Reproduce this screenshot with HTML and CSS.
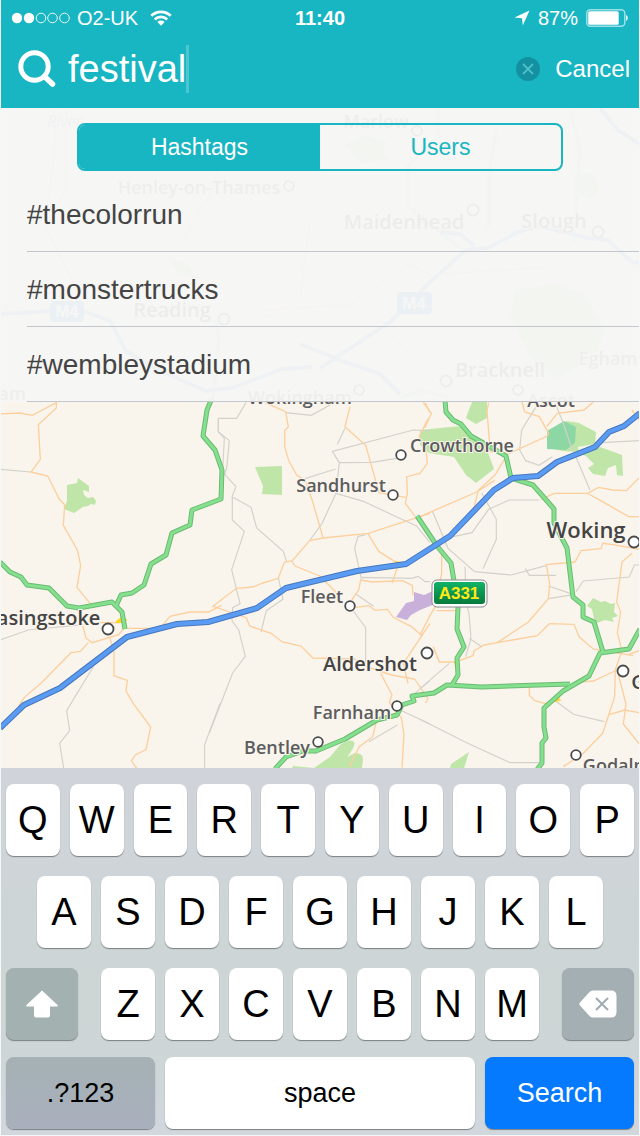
FILE: index.html
```html
<!DOCTYPE html>
<html lang="en">
<head>
    <meta charset="UTF-8">
    <meta name="viewport" content="width=device-width, initial-scale=1.0">
    <title>Search</title>
    <link rel="stylesheet" href="styles.css">
</head>
<body>
    <header class="header">
        <div class="status">
            <div class="status-left">
                <svg class="signal" width="60" height="12" viewBox="0 0 60 12">
                    <circle cx="6" cy="6" r="5.2" fill="#fff"/>
                    <circle cx="18" cy="6" r="5.2" fill="#fff"/>
                    <g fill="none" stroke="#fff" stroke-width="0.9">
                        <circle cx="30" cy="6" r="4.8"/>
                        <circle cx="41.500" cy="6" r="4.8"/>
                        <circle cx="53.500" cy="6" r="4.8"/>
                    </g>
                </svg>
                <span>O2-UK</span>
                <svg class="wifi" width="22" height="16" viewBox="0 0 22 16">
                    <g fill="none" stroke="#fff" stroke-width="2.8">
                        <path d="M1.300 5.800a13.800 13.800 0 0 1 19.400 0"/>
                        <path d="M4.800 9.500a8.800 8.800 0 0 1 12.400 0"/>
                    </g>
                    <path d="M11 15.800l-3.600-3.700a5.100 5.100 0 0 1 7.200 0z" fill="#fff"/>
                </svg>
            </div>
            <strong>11:40</strong>
            <div class="status-right">
                <svg width="16" height="16" viewBox="0 0 16 16">
                    <path d="M15.500 0.500L8.800 15.600 8 8.200 0.500 7.400z" fill="#fff"/>
                </svg>
                <span class="percent">87%</span>
                <svg width="43" height="18" viewBox="0 0 43 18">
                    <rect x="0.800" y="0.800" width="38" height="16.400" rx="3.500" fill="none" stroke="#9de0e6" stroke-width="1.500"/>
                    <rect x="2.200" y="2.200" width="30.500" height="13.600" rx="1.500" fill="#fff"/>
                    <path d="M40 6c2.400 0.600 2.400 5.400 0 6z" fill="#d5f3f5"/>
                </svg>
            </div>
        </div>
        <form class="search">
            <svg width="38" height="38" viewBox="0 0 38 38">
                <circle cx="16.500" cy="16.500" r="13.700" fill="none" stroke="#fff" stroke-width="5"/>
                <path d="M26.500 26.500l8 7.500" stroke="#fff" stroke-width="5.500" stroke-linecap="round"/>
            </svg>
            <input type="text" class="search-input" id="searchInput" value="festival" aria-label="Search">
            <span class="caret"></span>
            <button type="button" class="clear" aria-label="Clear">
                <svg width="24" height="24" viewBox="0 0 24 24">
                    <circle cx="12" cy="12" r="12" fill="#1491a0"/>
                    <path d="M7 7l10 10M17 7L7 17" stroke="#4cc0cb" stroke-width="1.800"/>
                </svg>
            </button>
            <button type="button" class="cancel">Cancel</button>
        </form>
    </header>

    <main class="content">
        <svg class="map" viewBox="1 108 638 660" preserveAspectRatio="xMidYMid slice">
            <defs>
                <linearGradient id="shield" x1="0" y1="0" x2="0" y2="1">
                    <stop offset="0" stop-color="#10b366"/>
                    <stop offset="1" stop-color="#087a3c"/>
                </linearGradient>
            </defs>
            <rect x="0" y="100" width="640" height="680" fill="#f9f5ed"/>

            <!-- woods and parks -->
            <g fill="#bfe6a8">
                <path d="M78 478l11 8v6l-6-2 1 5 4 3 5-1 3 4-1 4-4-1-3 2-5 1-9 6-10-4 3-8v-16l10-2z"/>
                <path d="M255 467l27-1v29l-20-1 1-8z"/>
                <path d="M466 418l6-16h15v16l-11 6z"/>
                <path d="M420 430l40-4 16 14 10 7 8 22-18 14-10-8-12-18-25-4-9-8z"/>
                <path d="M547 432l20-11 12 2 17 9-1 12-17 3 1 5-17-1-15-4z"/>
                <path d="M578 453l22-6 22 8 1 21-6-1-1-10-8 3-3 8-12-2-5-6 6-4-8-8z"/>
                <path d="M593 598l8 4 4-1 6 3 4-1-1 9 4 4-6 2 2 4-9-2-8 3-3-4-2-10-5-3z"/>
                <path d="M469 752l-5 16h-14l1-4z"/>
                <path d="M293 766l21 2 16-11 10-12q10-7 14-3 2 4-7 15l8-4q8 0 8 6l-1 9h-70z"/>
                <path d="M345 145l20-10 22 8-5 8 8 8-30 4zM575 175l16-2 8 14-8 12-16-8zM170 258l18 6 8 14-18-4zM515 290l40-6 28 10 22 34-10 30-40 20-24-20-20-40z"/>
            </g>
            <path d="M547 431l17-10 12 6-1 16-9 7-19-1z" fill="#8dd7a5"/>
            <path d="M396 617l10-14 8-2 0-9 10 3 9-4 2 13-15 6-9 5-4 5z" fill="#c9b0db"/>

            <!-- minor roads -->
            <g fill="none" stroke="#d4d1cb" stroke-width="3.500">
                <g transform="translate(0 400) scale(0.33333)">
                    <path d="M0 208l92 8M0 720l85-30 165-16M280 800l-80 132 9 60-30 38 12 74M660 910l-46 124v70M655 55v40l18 20-5 95"/>
                </g>
                <g transform="translate(210 400) scale(0.33333)">
                    <path d="M108 8L80 55H25v40l33 27-8 83-6 18 34 37-12 30 57 32 17 62 80 70 10 32M67 290v70l36 34-38 115 25 102-22 12-2 40 20 26 20 80-38 50-70 180M228 38l76 8 72-40M405 85l-23 48M660 92l-50-2-243 64 21 34 98-1 88-14M388 188l-10 92-42 90-36 50M285 236l92-29M378 280l82 24 120 56 40 18 40 50M466 405l-22 4-10 36 20 92M205 533l14 65-50 34-16 64M437 582l54 37M430 633l37 50v105M455 532l150 3 20-6 20 16h15M660 842l-60 50M570 930l90 42M562 975l-85 50"/>
                </g>
                <g transform="translate(420 400) scale(0.33333)">
                    <path d="M347 22l-42 68-6 60 18 32 40 14 40-26M410 20l20 50 20 60 60 140M545 128l113-6M38 335l46 110 80 70 110 10 104-28M185 278l44 80v60l-40 88M90 412l66-14 50-70 62-28h90M316 506l12 20h80M386 558l75 26-76 12M468 575l22-32 138-12 15-36h15M135 500l4 110 8 30 6 75-16 55M148 715l38 26M0 866l88-76M0 958l140 70 130 60h86M410 905l50 38 93 22"/>
                </g>
            </g>
            <g fill="none" stroke="#fccf9d" stroke-width="4">
                <g transform="translate(0 400) scale(0.33333)">
                    <path d="M0 42l60-3 37 7 72-38v16l-54 50 6 104-28 38 50 12 35 70 16 16-4 62 42 74 10 46-11 66 44 54M375 685h105l30-36 60-13h55l40-20M300 668h60M248 678l10 36 18 14 80-24 16-20M265 728l-24 26-28 4-90 92-50 42-18 28M330 715l12 40v72l40 14-4 32 22 38 52 70-14 68-32 16-12 18 18 24"/>
                </g>
                <g transform="translate(210 400) scale(0.33333)">
                    <path d="M165 8l62 27 8 46-11 10v50l12 40 24 44 26 16 20 58 33 114M420 20l-15 60 62 56 34 120 6 22 80 14M645 8l15 30M655 55l-28 55 20 30 5 50-22 30-40 10 2 50-6 30 30 40M660 340l-185 60-136 14-40 8-52 60-24 5-18 48-46 14-30 12-50 4-70 54 100 34 10 25 64 22 34 26 56 12 36 36 125 3 20 18 90 30 70 12 40 60-8 12M473 400l34 55 58 36-18 58M245 483l10 15 75 30 50 51M452 538l-5 30-22 32M452 540l35 6 90-4 30 14 2 30M437 622l40-5 18 14 37-3 18 24 54 28 34 28M660 670l-80 120 14 60M512 820l34 65-8 22 36 46 8 50-6 100M500 960l-12 50-40 30-30 60"/>
                </g>
                <g transform="translate(420 400) scale(0.33333)">
                    <path d="M10 8l24 32-20 44M206 8l-5 26 10 120 48 10M306 6l8 30 44 14 28 50-4 8-118 54M520 6l-28 24-80 10-32 40M0 350l170-74 54-35M255 175l-30 50-50 46-12 48M363 298l40-18h100l32-18 44 8 40 2 38-38M506 282l36 20 84 48h32M658 448l-80-14-30-4-5 16-60 6-18 34-86 8 10 58-4 44-60 70-93 62M636 460l-30 26-16 120 12 30-10 62 14 54M65 450v70l-8 40M48 560l12 36-30 50-30 60M50 632h62M40 740l18 46h48l53-19 3-14 30-18 160-28 36-36 74 2 16 38 42 36 120 20M328 860v26l16 16 30 8 50-10M460 848l60-5 65-30M606 752l-20 56-2 82-36 110-58 60-60 40M592 812l26 100-8 60 48 60M568 944l46-14 44 8M628 762l30-10M636 30l22 30"/>
                </g>
            </g>
            <g fill="#ffd51f">
                <path d="M116 621l4-3 3-3 4 5-2 3h-9zM31 699l5-2 1 3-5 2zM395 561l8 1 2 4-8 1zM454 661h4v6h-3zM556 698l4-1-1 4-5 1z"/>
            </g>

            <!-- roads hidden behind the results -->
            <g fill="none" stroke-linejoin="round">
                <path d="M56 108l-2 50-10 70M66 108v80l-20 40 30 60M180 245l30-50 20-60M290 190l20 30-10 80-40 20M260 310l90-5 60-40 20 10 120-8M370 310l80 90" stroke="#fbc78e"/>
                <path d="M438 108v30l-30 28v40l30 24 24 20M570 110l10 40-4 60-2 32M215 320l4 20-6 60M400 398l22-8 26 8M497 130l-8 40v60" stroke="#a5e2ab" stroke-width="3"/>
                <path d="M0 314l50-3M84 311l26 10 16 30 30 18 50 22 26-3 50-19 30-2M300 344l40 16 40 14 20 20M320 368l70-46 40-40 36-32 22-2 30-16 20-6 50 12 20 2 24 22 28 3M440 232l20 2 14 12M600 108l18 22 22 14" stroke="#7fabea" stroke-width="4"/>
            </g>

            <!-- A roads -->
            <g id="a-roads" fill="none" stroke-linejoin="round">
                <g stroke="#6cba75" stroke-width="5">
                    <path d="M212 398l-5 12-4 26 12 14 7 20-1 29-29 11-2 15-18 8-6 22-15 9-7 21-12 8-11 2-5 11"/>
                    <path d="M0 562l10 10 11 5 6 8 22 3 18 18 12 2 33-6 10 10 3 17"/>
                    <path d="M417 516l20 30 14 17 4 24 3 20-1 22 7 18-7 11 1 17-6 10"/>
                    <path d="M445 400l1 12 7 8 8 4 10 12 16 9 19 11 5 22 22 7 21 24v14l13 25 6 49 10 8v12l11 5 9 30"/>
                    <path d="M640 629l-11 20-29 4-11 23-26 15-19 17v19l2 11-4 5v20l-6 8"/>
                    <path d="M570 684l-88 3-35-2-13 8-22 3 2 5-12 4-5 10-20 5-32 19-29 12h-13l-17 6-11 12"/>
                </g>
                <g stroke="#84e08c" stroke-width="3">
                    <path d="M212 398l-5 12-4 26 12 14 7 20-1 29-29 11-2 15-18 8-6 22-15 9-7 21-12 8-11 2-5 11"/>
                    <path d="M0 562l10 10 11 5 6 8 22 3 18 18 12 2 33-6 10 10 3 17"/>
                    <path d="M417 516l20 30 14 17 4 24 3 20-1 22 7 18-7 11 1 17-6 10"/>
                    <path d="M445 400l1 12 7 8 8 4 10 12 16 9 19 11 5 22 22 7 21 24v14l13 25 6 49 10 8v12l11 5 9 30"/>
                    <path d="M640 629l-11 20-29 4-11 23-26 15-19 17v19l2 11-4 5v20l-6 8"/>
                    <path d="M570 684l-88 3-35-2-13 8-22 3 2 5-12 4-5 10-20 5-32 19-29 12h-13l-17 6-11 12"/>
                </g>
            </g>

            <!-- motorway -->
            <g fill="none" stroke-linejoin="round">
                <path d="M0 728l24-23 36-17 67-51 50-13 31-2 49-14 29-20 71-17 49-7 44-28 44-46 19-12 25-2 19-14 38-15 14-15 15-6 16-13" stroke="#4777bd" stroke-width="6"/>
                <path d="M0 728l24-23 36-17 67-51 50-13 31-2 49-14 29-20 71-17 49-7 44-28 44-46 19-12 25-2 19-14 38-15 14-15 15-6 16-13" stroke="#5a9cf3" stroke-width="4"/>
            </g>

            <!-- towns -->
            <g fill="#fff" stroke="#4a4a4a" stroke-width="1.800">
                <circle cx="108" cy="629" r="5.500"/>
                <circle cx="401" cy="455" r="4.800"/>
                <circle cx="393" cy="495" r="4.800"/>
                <circle cx="634" cy="542" r="5.500"/>
                <circle cx="350" cy="606" r="4.800"/>
                <circle cx="427" cy="653" r="5.500"/>
                <circle cx="397" cy="706" r="4.800"/>
                <circle cx="318" cy="742" r="4.800"/>
                <circle cx="623" cy="671" r="5.500"/>
                <circle cx="576" cy="755" r="4.800"/>
                <circle cx="289" cy="186" r="4.800"/>
                <circle cx="417" cy="131" r="4.800"/>
                <circle cx="473" cy="210" r="5.500"/>
                <circle cx="598" cy="232" r="5.500"/>
                <circle cx="224" cy="319" r="5.500"/>
                <circle cx="446" cy="381" r="5.500"/>
                <circle cx="359" cy="390" r="4.800"/>
                <circle cx="518" cy="390" r="4.800"/>
            </g>
            <g class="town">
                <text x="462" y="452">Crowthorne</text>
                <text x="341" y="492">Sandhurst</text>
                <text x="322" y="603">Fleet</text>
                <text x="352" y="719">Farnham</text>
                <text x="277" y="754">Bentley</text>
                <text x="630" y="772">Godalming</text>
                <text x="199" y="194">Henley-on-Thames</text>
                <text x="376" y="128">Marlow</text>
                <text x="608" y="365">Egham</text>
                <text x="300" y="404">Wokingham</text>
                <text x="551" y="407">Ascot</text>
                <text x="12" y="400">am</text>
            </g>
            <g class="town town-big">
                <text x="42" y="625">Basingstoke</text>
                <text x="370" y="671">Aldershot</text>
                <text class="town-large" x="586" y="538">Woking</text>
                <text x="677" y="689">Guildford</text>
                <text x="404" y="229">Maidenhead</text>
                <text x="554" y="228">Slough</text>
                <text x="172" y="317">Reading</text>
                <text x="500" y="377">Bracknell</text>
            </g>
            <text class="river" x="47" y="127">River</text>

            <!-- road shields -->
            <g class="shield">
                <rect x="432" y="580" width="55" height="27" rx="5" fill="#fff" stroke="#8b8b8b"/>
                <rect x="434" y="582" width="51" height="22" rx="3" fill="url(#shield)"/>
                <text x="459" y="599" fill="#ffe916">A331</text>
                <rect x="397" y="292" width="35" height="22" rx="4" fill="#2f8fdc"/>
                <text x="414" y="309" fill="#fff">M4</text>
                <rect x="50" y="301" width="34" height="21" rx="4" fill="#2f8fdc"/>
                <text x="67" y="317" fill="#fff">M4</text>
            </g>
        </svg>

        <section class="results">
            <div class="tabs">
                <button type="button" class="tab active">Hashtags</button>
                <button type="button" class="tab">Users</button>
            </div>
            <ul class="tag-list">
                <li>#thecolorrun</li>
                <li>#monstertrucks</li>
                <li>#wembleystadium</li>
            </ul>
        </section>
    </main>

    <div class="keyboard">
        <div class="key-row">
            <button class="key">Q</button>
            <button class="key">W</button>
            <button class="key">E</button>
            <button class="key">R</button>
            <button class="key">T</button>
            <button class="key">Y</button>
            <button class="key">U</button>
            <button class="key">I</button>
            <button class="key">O</button>
            <button class="key">P</button>
        </div>
        <div class="key-row middle">
            <button class="key">A</button>
            <button class="key">S</button>
            <button class="key">D</button>
            <button class="key">F</button>
            <button class="key">G</button>
            <button class="key">H</button>
            <button class="key">J</button>
            <button class="key">K</button>
            <button class="key">L</button>
        </div>
        <div class="key-row">
            <button class="key shift" aria-label="Shift">
                <svg width="32" height="28" viewBox="0 0 32 28">
                    <path d="M16 0.500L31.500 15c0.700 0.800 0.300 1.600-0.600 1.600H24v8.400q0 2.500-2.500 2.500h-11Q8 27.500 8 25v-8.400H1.100c-0.900 0-1.300-0.800-0.600-1.600z" fill="#fff"/>
                </svg>
            </button>
            <button class="key">Z</button>
            <button class="key">X</button>
            <button class="key">C</button>
            <button class="key">V</button>
            <button class="key">B</button>
            <button class="key">N</button>
            <button class="key">M</button>
            <button class="key delete" aria-label="Delete">
                <svg width="38" height="28" viewBox="0 0 38 28">
                    <path d="M14 0.500h18q5.500 0 5.500 5.500v16q0 5.500-5.500 5.500H14q-2 0-3.500-1.500L1 15.500q-1.400-1.500 0-3L10.500 2Q12 0.500 14 0.500z" fill="#fff"/>
                    <path d="M17 8l12 12M29 8L17 20" stroke="#9fabae" stroke-width="2"/>
                </svg>
            </button>
        </div>
        <div class="key-row bottom">
            <button class="key word numbers">.?123</button>
            <button class="key word space">space</button>
            <button class="key word go">Search</button>
        </div>
    </div>
</body>
</html>
```
FILE: styles.css
```css
* {
    box-sizing: border-box;
}

body {
    display: flex;
    flex-direction: column;
    min-height: 100vh;
    margin: 0;
    padding: 0 1px 1px;
    background: #f4f8f9;
    color: #000;
    font-family: "Liberation Sans", Arial, sans-serif;
}

button,
input {
    margin: 0;
    padding: 0;
    border: none;
    background: none;
    color: inherit;
    font-family: inherit;
}

button {
    cursor: pointer;
}

svg {
    display: block;
    flex: none;
}

/* header */
.header {
    padding-bottom: 6px;
    background: #18b5c2;
    color: #fff;
}

.status {
    display: grid;
    grid-template-columns: 1fr auto 1fr;
    align-items: center;
    height: 36px;
    padding: 0 10px;
    font-size: 20px;
}

.status-left,
.status-right {
    display: flex;
    align-items: center;
}

.status-left {
    gap: 6px;
}

.wifi {
    margin-left: 6px;
}

.status-right {
    justify-content: flex-end;
    gap: 8px;
}

.search {
    display: flex;
    align-items: center;
    height: 66px;
    padding: 0 9px 0 17px;
}

.search-input {
    field-sizing: content;
    height: 48px;
    margin-left: 12px;
    outline: none;
    font-size: 38px;
}

.caret {
    width: 3px;
    height: 48px;
    background: #4cc6d0;
}

.clear {
    margin-left: auto;
}

.cancel {
    margin-left: 15px;
    font-size: 24px;
}

/* map */
.content {
    position: relative;
    flex: 1;
    min-height: 296px;
    overflow: hidden;
}

.map {
    position: absolute;
    top: 0;
    left: 0;
    width: 100%;
    height: 100%;
}

.town {
    fill: #5c5c5e;
    stroke: #f9f5ed;
    stroke-width: 2px;
    paint-order: stroke;
    font-family: "Open Sans", sans-serif;
    font-size: 18px;
    font-weight: 600;
    text-anchor: middle;
}

.town-big {
    fill: #444;
    font-size: 20px;
}

.town-large {
    font-size: 22px;
}

.river {
    fill: #7ba6d8;
    font-family: "Open Sans", sans-serif;
    font-size: 16px;
    font-style: italic;
}

.shield {
    font-size: 17px;
    font-weight: bold;
    text-anchor: middle;
}

/* results */
.results {
    position: relative;
    padding-top: 15px;
    background: rgba(246, 246, 244, 0.95);
}

.tabs {
    display: flex;
    height: 48px;
    margin: 0 76px 6px;
    overflow: hidden;
    border: 2px solid #18b5c2;
    border-radius: 8px;
}

.tab {
    flex: 1;
    color: #18b5c2;
    font-size: 23px;
}

.tab.active {
    background: #18b5c2;
    color: #fff;
}

.tag-list {
    margin: 0;
    padding: 0 0 0 26px;
    list-style: none;
}

.tag-list li {
    height: 75px;
    border-bottom: 1px solid #c3c7cd;
    color: #444;
    font-size: 28px;
    line-height: 76px;
}

/* keyboard */
.keyboard {
    padding: 16px 5px 6px;
    background: linear-gradient(#d0d4da, #cdd5d5 55%, #cdd5d5 70%, #d1d7dd);
}

.key-row {
    display: flex;
    gap: 10px;
    margin-bottom: 20px;
}

.key-row:nth-child(3) {
    margin-bottom: 17px;
}

.key-row.middle {
    padding: 0 31px;
}

.key-row.bottom {
    margin-bottom: 0;
}

.key {
    display: flex;
    flex: 1;
    align-items: center;
    justify-content: center;
    height: 72px;
    border-radius: 8px;
    background: #fff;
    box-shadow: 0 1px 1px #7c7f82;
    font-size: 38px;
}

.shift,
.delete {
    flex: 0 0 72px;
    background: #a3b1b1;
}

.shift {
    margin-right: 13px;
}

.delete {
    margin-left: 13px;
    background: #a3afb3;
}

.word {
    font-size: 27px;
}

.numbers,
.go {
    flex: 0 0 149px;
}

.numbers {
    background: linear-gradient(#a5b1b4, #a9b0bd);
}

.go {
    background: #057aff;
    color: #fff;
}
```
